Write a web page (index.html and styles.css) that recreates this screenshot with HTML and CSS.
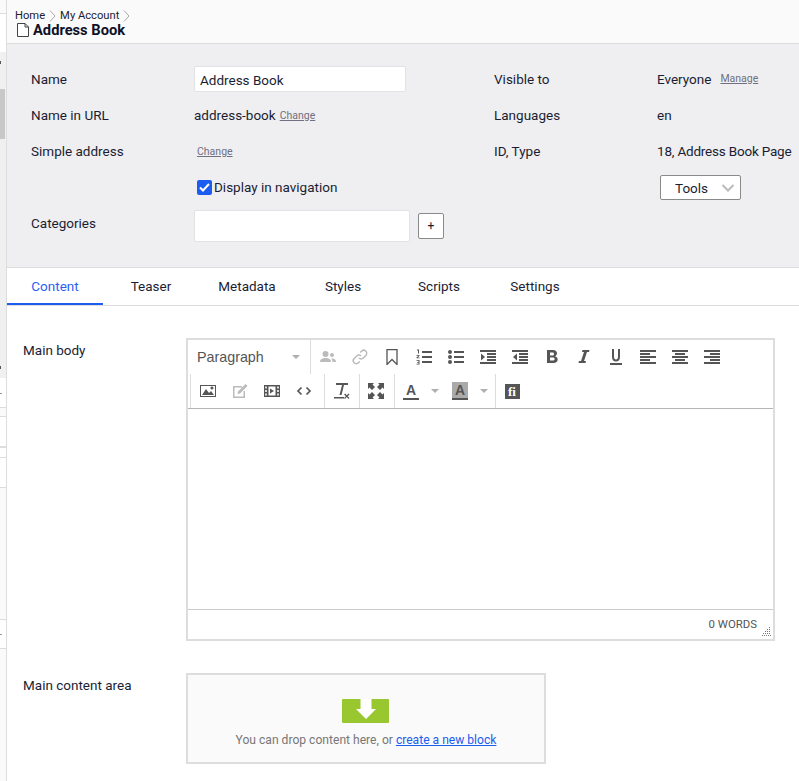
FILE: index.html
```html
<!DOCTYPE html>
<html lang="en">
<head>
    <meta charset="UTF-8">
    <meta name="viewport" content="width=device-width, initial-scale=1.0">
    <title>Address Book</title>
    <link rel="stylesheet" href="styles.css">
</head>
<body>
    <div class="side-strip">
        <div class="strip-top"></div>
        <div class="strip-tree">
            <div class="strip-thumb"></div>
            <i class="tick t1"></i>
            <i class="tick t2"></i>
        </div>
        <div class="strip-row h30"><i class="tick light t3"></i></div>
        <div class="strip-row h9 pale"></div>
        <div class="strip-row h31"></div>
        <div class="strip-row h10"></div>
        <div class="strip-row h30"></div>
        <div class="strip-row h132 pale"></div>
        <div class="strip-row h29"><i class="tick light t4"></i></div>
        <div class="strip-row last pale"></div>
    </div>

    <div class="page">
        <div class="page-head">
            <div class="crumbs">
                <span>Home</span>
                <svg class="crumb-sep" width="7" height="12" viewBox="0 0 7 12"><path d="M1 .5 6 6 1 11.500" fill="none" stroke="#aaa"/></svg>
                <span>My Account</span>
                <svg class="crumb-sep" width="7" height="12" viewBox="0 0 7 12"><path d="M1 .5 6 6 1 11.500" fill="none" stroke="#aaa"/></svg>
            </div>
            <div class="page-title">
                <svg width="12" height="14" viewBox="0 0 12 14"><path d="M.5.5h7.500l3.500 3.500v9.500h-11zM8 .5v3.500h3.500" fill="#fff" stroke="#444"/></svg>
                <span>Address Book</span>
            </div>
        </div>

        <div class="meta">
            <div class="meta-label">Name</div>
            <div class="meta-value"><input class="text-input name-input" type="text" value="Address Book"></div>
            <div class="meta-label">Visible to</div>
            <div class="meta-value"><span>Everyone</span><a class="small-link manage-link">Manage</a></div>

            <div class="meta-label">Name in URL</div>
            <div class="meta-value"><span>address-book</span><a class="small-link">Change</a></div>
            <div class="meta-label">Languages</div>
            <div class="meta-value">en</div>

            <div class="meta-label">Simple address</div>
            <div class="meta-value"><a class="small-link simple-link">Change</a></div>
            <div class="meta-label">ID, Type</div>
            <div class="meta-value id-type">18, Address Book Page</div>

            <div class="meta-label"></div>
            <div class="meta-value">
                <label class="check-row">
                    <span class="check-box"><svg width="15" height="15" viewBox="0 0 15 15"><path d="M3 7.500 6 10.500 12 4" fill="none" stroke="#fff" stroke-width="2"/></svg></span>
                    Display in navigation
                </label>
            </div>
            <div class="meta-label"></div>
            <div class="meta-value">
                <div class="tools-btn">
                    <span>Tools</span>
                    <svg width="14" height="8" viewBox="0 0 14 8"><path d="M1.500 1 7 6.500 12.500 1" fill="none" stroke="#bbb" stroke-width="2"/></svg>
                </div>
            </div>

            <div class="meta-label">Categories</div>
            <div class="meta-value cat-value">
                <input class="text-input cat-input" type="text">
                <div class="plus-btn">+</div>
            </div>
        </div>

        <div class="tabs">
            <div class="tab active">Content</div>
            <div class="tab">Teaser</div>
            <div class="tab">Metadata</div>
            <div class="tab">Styles</div>
            <div class="tab">Scripts</div>
            <div class="tab">Settings</div>
        </div>

        <div class="content">
            <div class="field">
                <div class="field-label">Main body</div>
                <div class="editor">
                    <div class="toolbar">
                        <div class="tool-row">
                            <div class="format-box"><span>Paragraph</span><i class="caret"></i></div>
                            <div class="tool-group">
                                <div class="tool dim"><svg width="16" height="16" viewBox="0 0 16 16"><circle cx="5.500" cy="5" r="3"/><path d="M0 13c0-3 2.500-4 5.500-4s5.500 1 5.500 4z"/><circle cx="12" cy="6" r="2"/><path d="M12 9.500c2 0 4 .8 4 3.500h-3.500c0-1.500-.3-2.500-1.500-3.500z"/></svg></div>
                                <div class="tool dim"><svg width="16" height="16" viewBox="0 0 16 16"><g fill="none" stroke="#bbb" stroke-width="1.500"><path d="M7 9a3 3 0 0 0 4.300 0l2.500-2.500a3 3 0 0 0-4.300-4.300L8.200 3.500"/><path d="M9 7a3 3 0 0 0-4.300 0L2.200 9.500a3 3 0 0 0 4.300 4.300l1.300-1.300"/></g></svg></div>
                                <div class="tool"><svg width="16" height="16" viewBox="0 0 16 16"><path d="M3 .5h10v15L8 10.500 3 15.500z" fill="none" stroke="#555" stroke-width="1.300"/></svg></div>
                                <div class="tool"><svg width="16" height="16" viewBox="0 0 16 16"><path d="M6 2h10v2H6zM6 7h10v2H6zM6 12h10v2H6zM1 .5h2v4H2V1.500H1zM.5 6h3v.8L1.700 8.500h1.800v.8h-3v-.8L2.300 6.800H.5zM.5 11h3v4.500h-3v-.8h2v-1H1.200v-.8h1.300v-1.100h-2z"/></svg></div>
                                <div class="tool"><svg width="16" height="16" viewBox="0 0 16 16"><circle cx="2" cy="3" r="2"/><circle cx="2" cy="8" r="2"/><circle cx="2" cy="13" r="2"/><path d="M6 2h10v2H6zM6 7h10v2H6zM6 12h10v2H6z"/></svg></div>
                                <div class="tool"><svg width="16" height="16" viewBox="0 0 16 16"><path d="M0 1h16v2H0zM7 4h9v2H7zM7 7h9v2H7zM7 10h9v2H7zM0 13h16v2H0zM1 4.500 5 8l-4 3.500z"/></svg></div>
                                <div class="tool"><svg width="16" height="16" viewBox="0 0 16 16"><path d="M0 1h16v2H0zM7 4h9v2H7zM7 7h9v2H7zM7 10h9v2H7zM0 13h16v2H0zM5 4.500 1 8l4 3.500z"/></svg></div>
                                <div class="tool"><svg width="16" height="16" viewBox="0 0 16 16"><path fill-rule="evenodd" d="M3 1h6c2.500 0 4 1.300 4 3.300 0 1.400-.8 2.400-2 2.900 1.700.4 2.700 1.600 2.700 3.300 0 2.300-1.700 3.500-4.200 3.500H3zM6 3.400v3h2.500c1 0 1.600-.6 1.600-1.500s-.6-1.500-1.600-1.500zM6 8.600v3h2.900c1.100 0 1.800-.6 1.800-1.500s-.7-1.500-1.800-1.500z"/></svg></div>
                                <div class="tool"><svg width="16" height="16" viewBox="0 0 16 16"><path d="M6.500 1h7l-.5 2h-2L8 12h2l-.5 2h-7l.5-2h2L8 3H6z"/></svg></div>
                                <div class="tool"><svg width="16" height="16" viewBox="0 0 16 16"><path d="M2 14h12v2H2zM4 0h2v8c0 1.500.8 2.500 2 2.500s2-1 2-2.500V0h2v8c0 3-1.700 4.500-4 4.500S4 11 4 8z"/></svg></div>
                                <div class="tool"><svg width="16" height="16" viewBox="0 0 16 16"><path d="M0 1h16v2H0zM0 4h10v2H0zM0 7h16v2H0zM0 10h10v2H0zM0 13h16v2H0z"/></svg></div>
                                <div class="tool"><svg width="16" height="16" viewBox="0 0 16 16"><path d="M0 1h16v2H0zM3 4h10v2H3zM0 7h16v2H0zM3 10h10v2H3zM0 13h16v2H0z"/></svg></div>
                                <div class="tool"><svg width="16" height="16" viewBox="0 0 16 16"><path d="M0 1h16v2H0zM6 4h10v2H6zM0 7h16v2H0zM6 10h10v2H6zM0 13h16v2H0z"/></svg></div>
                            </div>
                        </div>
                        <div class="tool-row">
                            <div class="tool-group g-first">
                                <div class="tool"><svg width="16" height="16" viewBox="0 0 16 16"><path fill-rule="evenodd" d="M0 2h16v12H0zM1 3v10h14V3z"/><path d="M2 12l4-6 3 4 2-2 3 4zM12 6.500a1.500 1.500 0 1 0-.1 0z"/></svg></div>
                                <div class="tool dim"><svg width="16" height="16" viewBox="0 0 16 16"><path d="M1 3h9v1.500H2.500v9h9V8H13v7H1z" fill="#bbb"/><path d="M13.500 1 15.500 3 8 10.500l-2.500.5.500-2.500z" fill="#bbb"/></svg></div>
                                <div class="tool"><svg width="16" height="16" viewBox="0 0 16 16"><path fill-rule="evenodd" d="M0 2h16v12H0zM1.200 3.500v2h1.600v-2zM1.200 7v2h1.600V7zM1.200 10.500v2h1.600v-2zM13.200 3.500v2h1.600v-2zM13.200 7v2h1.600V7zM13.200 10.500v2h1.600v-2zM4.500 3.500v9h7v-9z"/><path d="M6 5.500 10 8l-4 2.500z"/></svg></div>
                                <div class="tool"><svg width="16" height="16" viewBox="0 0 16 16"><path d="M5.500 4.500 2 8l3.500 3.500M10.500 4.500 14 8l-3.500 3.500" fill="none" stroke="#555" stroke-width="1.700"/></svg></div>
                            </div>
                            <div class="tool-group g-clear">
                                <div class="tool"><svg width="17" height="18" viewBox="0 0 17 18"><path d="M2 1h12v2H10L7.500 13h-2L8 3H2zM0 15h10v1.500H0zM11 11.500l1.800 1.800 1.800-1.800.9.900-1.800 1.800 1.800 1.800-.9.900-1.800-1.800-1.800 1.800-.9-.9 1.800-1.800-1.800-1.800z"/></svg></div>
                            </div>
                            <div class="tool-group g-full">
                                <div class="tool"><svg width="16" height="16" viewBox="0 0 16 16"><path d="M0 0h6L4.500 1.500 7 4 4 7 1.500 4.500 0 6zM16 0v6l-1.500-1.500L12 7 9 4l2.500-2.500L10 0zM0 16v-6l1.500 1.500L4 9l3 3-2.500 2.500L6 16zM16 16h-6l1.500-1.500L9 12l3-3 2.500 2.500L16 10z"/></svg></div>
                            </div>
                            <div class="tool-group g-color">
                                <div class="split">
                                    <span class="color-a">A</span><i class="caret"></i>
                                </div>
                                <div class="split">
                                    <span class="color-a back">A</span><i class="caret"></i>
                                </div>
                            </div>
                            <div class="tool-group g-last">
                                <div class="tool"><span class="fi-icon">fi</span></div>
                            </div>
                        </div>
                    </div>
                    <div class="edit-area"></div>
                    <div class="status-bar">
                        <span>0 WORDS</span>
                        <svg class="grip" width="9" height="9" viewBox="0 0 9 9"><path d="M7 0h1v1H7zM5 2h1v1H5zM7 2h1v1H7zM3 4h1v1H3zM5 4h1v1H5zM7 4h1v1H7zM1 6h1v1H1zM3 6h1v1H3zM5 6h1v1H5zM7 6h1v1H7zM0 8h1v1H0zM2 8h1v1H2zM4 8h1v1H4zM6 8h1v1H6zM8 8h1v1H8z" fill="#777"/></svg>
                    </div>
                </div>
            </div>

            <div class="field drop-field">
                <div class="field-label">Main content area</div>
                <div class="drop-area">
                    <div class="drop-icon"><svg width="20" height="20" viewBox="0 0 20 20"><path d="M4.500 0h11v10H20L10 20 0 10h4.500z" fill="#fff"/></svg></div>
                    <div class="drop-text">You can drop content here, or <a class="drop-link">create a new block</a></div>
                </div>
            </div>
        </div>
    </div>
</body>
</html>
```
FILE: styles.css
```css
* {
    margin: 0;
    padding: 0;
    box-sizing: border-box;
}

body {
    font-family: Roboto, 'Liberation Sans', sans-serif;
    font-size: 13.500px;
    color: #1b1d33;
    background: #fff;
    display: flex;
    height: 781px;
    overflow: hidden;
}

/* bit of the navigation pane that shows at the left */
.side-strip {
    width: 7px;
    flex-shrink: 0;
    position: relative;
    background: #fafafa;
    border-right: 1px solid #ddd;
    display: flex;
    flex-direction: column;
}

.strip-top {
    height: 39px;
    background: #fff;
    border-top: 1px solid #ddd;
    margin-top: 13px;
}

.strip-tree {
    height: 326px;
    background: #f0f0f0;
    padding-top: 37px;
}

.strip-thumb {
    width: 5px;
    height: 50px;
    background: #c8c8c8;
}

.strip-row {
    background: #fff;
    border-bottom: 1px solid #ddd;
}

.strip-row.pale { background: #fafafa; }
.strip-row.last { flex: 1; border-bottom: 0; }
.h9 { height: 9px; }
.h10 { height: 10px; }
.h29 { height: 29px; }
.h30 { height: 30px; }
.h31 { height: 31px; border-bottom-width: 2px; }
.h132 { height: 132px; }

.tick {
    position: absolute;
    left: 0;
    width: 1px;
    height: 3px;
    background: #555;
}

.tick.light {
    width: 2px;
    height: 1px;
    background: #999;
}

.t1 { top: 61px; }
.t2 { top: 366px; }
.t3 { top: 393px; }
.t4 { top: 634px; }

.page {
    flex: 1;
    min-width: 0;
}

.page-head {
    height: 44px;
    background: #fafafa;
    border-bottom: 1px solid #ddd;
    padding: 9px 0 0 8px;
}

.crumbs {
    display: flex;
    align-items: center;
    gap: 4px;
    font-size: 11.200px;
    line-height: 13px;
    height: 13px;
}

.page-title {
    display: flex;
    align-items: center;
    gap: 4px;
    font-size: 14.700px;
    font-weight: 700;
    line-height: 16px;
    margin-left: 2px;
    color: #0f1126;
}

.meta {
    height: 224px;
    background: #efeff1;
    border-bottom: 1px solid #ddd;
    padding: 17px 0 0 24px;
    display: grid;
    grid-template-columns: 163px 300px 163px 1fr;
    grid-auto-rows: 36px;
}

.meta-label, .meta-value {
    display: flex;
    align-items: center;
    white-space: nowrap;
}

.meta-label {
    padding-bottom: 1px;
}

.id-type {
    letter-spacing: -.2px;
}

.small-link {
    font-size: 10.500px;
    color: #6f7080;
    text-decoration: underline;
    margin-left: 4px;
}

.simple-link {
    margin-left: 3px;
}

.manage-link {
    margin: -2px 0 0 9px;
}

.text-input {
    height: 26px;
    border: 1px solid #e3e3e6;
    border-radius: 2px;
    background: #fff;
    font: inherit;
    color: inherit;
    padding: 1px 5px 0;
    outline: none;
}

.name-input {
    width: 212px;
}

.check-row {
    display: flex;
    align-items: center;
    margin-left: 3px;
}

.check-box {
    width: 15px;
    height: 15px;
    margin-right: 2px;
    background: #1c5cf0;
    border-radius: 2px;
    display: block;
}

.check-box svg {
    display: block;
}

.tools-btn {
    width: 81px;
    height: 25px;
    margin-left: 3px;
    border: 1px solid #8a8a8a;
    border-radius: 2px;
    background: #fff;
    display: flex;
    align-items: center;
    padding: 1px 5px 0 14px;
    justify-content: space-between;
}

.cat-value {
    align-items: flex-start;
    margin-top: 5px;
    gap: 8px;
}

.cat-input {
    width: 216px;
    height: 32px;
}

.plus-btn {
    width: 26px;
    height: 26px;
    margin-top: 3px;
    border: 1px solid #8a8a8a;
    border-radius: 2px;
    background: #fff;
    display: flex;
    align-items: center;
    justify-content: center;
    font-size: 12px;
}

.tabs {
    height: 38px;
    display: flex;
    border-bottom: 1px solid #ddd;
}

.tab {
    width: 96px;
    height: 37px;
    line-height: 37px;
    text-align: center;
}

.tab.active {
    color: #2c5ff0;
    border-bottom: 2px solid #1c5cf0;
}

.content {
    padding: 32px 0 0 16px;
}

.field {
    display: grid;
    grid-template-columns: 163px 1fr;
}

.field-label {
    line-height: 16px;
    padding-top: 4px;
}

.editor {
    width: 589px;
    height: 303px;
    border: 2px solid #ddd;
    display: flex;
    flex-direction: column;
}

.toolbar {
    height: 69px;
    border-bottom: 1px solid #b5b5b5;
}

.tool-row {
    height: 34px;
    display: flex;
}

.format-box {
    width: 122px;
    display: flex;
    align-items: center;
    justify-content: space-between;
    padding: 0 10px 0 9px;
    font-family: 'Liberation Sans', Arial, sans-serif;
    font-size: 14.300px;
    color: #555;
}

.caret {
    display: block;
    width: 0;
    height: 0;
    border-left: 4px solid transparent;
    border-right: 4px solid transparent;
    border-top: 4px solid #b0b0b0;
}

.tool-group {
    display: flex;
    border-left: 1px solid #ddd;
    padding-left: 1px;
}

.tool {
    width: 32px;
    height: 34px;
    display: flex;
    align-items: center;
    justify-content: center;
}

.tool svg {
    fill: #555;
}

.tool.dim svg {
    fill: #bbb;
}

.g-first {
    margin-left: 2px;
    padding-right: 4px;
}

.g-clear {
    padding: 0 1px;
}

.g-full {
    padding-left: 0;
    padding-right: 2px;
}

.g-color {
    padding: 0 2px 0 0;
}

.g-last {
    padding-left: 0;
}

.split {
    width: 49px;
    display: flex;
    align-items: center;
    padding-left: 8px;
    gap: 12px;
}

.color-a {
    width: 16px;
    font-family: 'Liberation Sans', Arial, sans-serif;
    font-weight: 700;
    font-size: 14px;
    line-height: 16px;
    text-align: center;
    color: #555;
    border-bottom: 2px solid #555;
}

.color-a.back {
    background: #aaa;
}

.fi-icon {
    display: block;
    width: 15px;
    height: 15px;
    background: #555;
    color: #fff;
    font-family: 'Liberation Serif', serif;
    font-weight: 700;
    font-size: 13px;
    line-height: 15px;
    text-align: center;
}

.edit-area {
    flex: 1;
    border-bottom: 1px solid #ccc;
}

.status-bar {
    height: 29px;
    display: flex;
    justify-content: flex-end;
    align-items: center;
    font-size: 11.400px;
    color: #555;
    padding: 0 16px 2px 0;
    position: relative;
}

.grip {
    position: absolute;
    right: 2px;
    bottom: 3px;
}

.drop-field {
    margin-top: 32px;
}

.drop-area {
    width: 360px;
    height: 91px;
    border: 2px solid #ddd;
    background: #fafafa;
    display: flex;
    flex-direction: column;
    align-items: center;
    padding-top: 24px;
}

.drop-icon {
    width: 47px;
    height: 24px;
    margin-right: 1px;
    background: #99c72f;
    border-radius: 1px;
    display: flex;
    justify-content: center;
    align-items: flex-start;
}

.drop-icon svg {
    display: block;
}

.drop-text {
    margin-top: 10px;
    font-size: 12.100px;
    color: #777;
}

.drop-link {
    color: #1c5cf0;
    text-decoration: underline;
}
```
